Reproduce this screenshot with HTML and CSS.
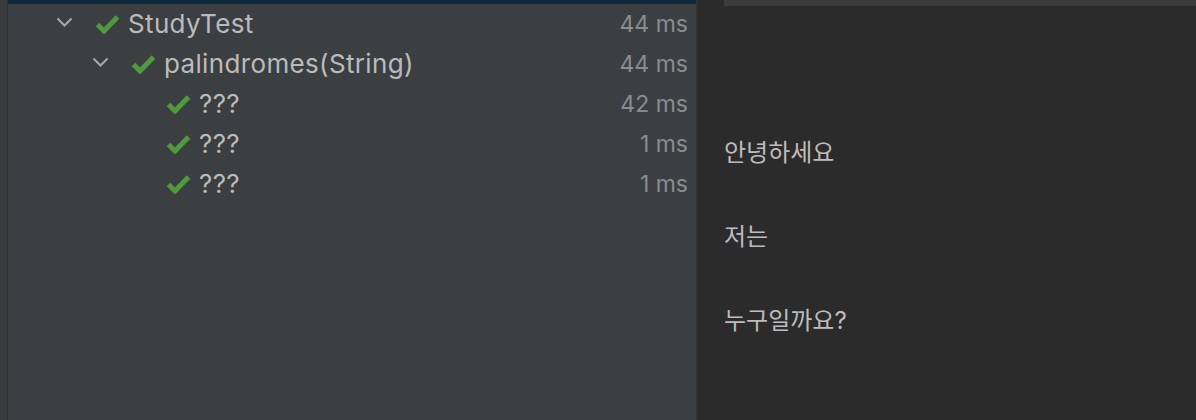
FILE: index.html
```html
<!DOCTYPE html>
<html>
<head>
<meta charset="utf-8">
<title>Test Runner</title>
<link rel="stylesheet" href="styles.css">
</head>
<body>
<div class="ide">
  <div class="gutter"></div>
  <div class="tree">
    <div class="tree-top"></div>
    <div class="row lv0">
      <span class="toggle"><svg width="17" height="10" viewBox="0 0 17 10"><path d="M1.5 1.5 L8.5 8.5 L15.5 1.5" fill="none" stroke="#a7a9ab" stroke-width="2"/></svg></span>
      <svg class="check" width="25" height="20" viewBox="0 0 25 20"><path d="M2.5 10.5 L9 17 L22.5 3" fill="none" stroke="#4f9a3d" stroke-width="5"/></svg>
      <span class="name">StudyTest</span>
      <span class="time">44 ms</span>
    </div>
    <div class="row lv1">
      <span class="toggle"><svg width="17" height="10" viewBox="0 0 17 10"><path d="M1.5 1.5 L8.5 8.5 L15.5 1.5" fill="none" stroke="#a7a9ab" stroke-width="2"/></svg></span>
      <svg class="check" width="25" height="20" viewBox="0 0 25 20"><path d="M2.5 10.5 L9 17 L22.5 3" fill="none" stroke="#4f9a3d" stroke-width="5"/></svg>
      <span class="name">palindromes(String)</span>
      <span class="time">44 ms</span>
    </div>
    <div class="row lv2">
      <span class="toggle"></span>
      <svg class="check" width="25" height="20" viewBox="0 0 25 20"><path d="M2.5 10.5 L9 17 L22.5 3" fill="none" stroke="#4f9a3d" stroke-width="5"/></svg>
      <span class="name">???</span>
      <span class="time">42 ms</span>
    </div>
    <div class="row lv2">
      <span class="toggle"></span>
      <svg class="check" width="25" height="20" viewBox="0 0 25 20"><path d="M2.5 10.5 L9 17 L22.5 3" fill="none" stroke="#4f9a3d" stroke-width="5"/></svg>
      <span class="name">???</span>
      <span class="time">1 ms</span>
    </div>
    <div class="row lv2">
      <span class="toggle"></span>
      <svg class="check" width="25" height="20" viewBox="0 0 25 20"><path d="M2.5 10.5 L9 17 L22.5 3" fill="none" stroke="#4f9a3d" stroke-width="5"/></svg>
      <span class="name">???</span>
      <span class="time">1 ms</span>
    </div>
  </div>
  <div class="output">
    <div class="output-top"></div>
    <div class="lines">
      <p>안녕하세요</p>
      <p>저는</p>
      <p>누구일까요?</p>
    </div>
  </div>
</div>
</body>
</html>
```

FILE: styles.css
```css
html, body { margin: 0; padding: 0; height: 100%; }
body { background: #2b2b2b; font: 22px/40px Inter, "Noto Sans CJK KR", sans-serif; color: #bbbbbb; overflow: hidden; }

.ide { display: flex; height: 420px; }
.gutter { width: 7px; background: #393b3d; border-right: 1px solid #2d2f30; }

.tree { width: 688px; background: #3c3f41; }
.tree-top { height: 4px; background: #0d293e; }
.row { display: flex; align-items: center; height: 40px; padding-right: 8px; }
.row.lv0 { padding-left: 48px; }
.row.lv1 { padding-left: 84px; }
.row.lv2 { padding-left: 119px; }
.toggle { width: 39px; height: 40px; display: flex; align-items: center; flex: none; }
.toggle svg { margin-top: -4px; }
.check { flex: none; margin-right: 8px; }
.name { font-size: 26px; letter-spacing: 0.35px; color: #bbbbbb; }
.time { margin-left: auto; font-size: 23px; color: #8a8c8e; }

.output { flex: 1; background: #2b2b2b; border-left: 1px solid #323232; }
.output-top { height: 6px; margin-left: 27px; background: #3c3c3c; }
.lines { display: flex; flex-direction: column; gap: 56px; padding: 133px 0 0 27px; }
.lines p { margin: 0; font-size: 24px; line-height: 28px; color: #bcbcbc; }
```
